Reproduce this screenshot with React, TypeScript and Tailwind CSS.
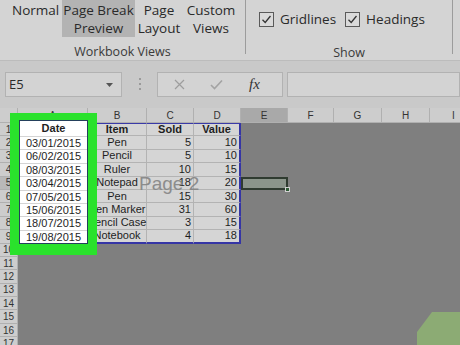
import React from 'react';

const rows: string[][] = [
  ['Date', 'Item', 'Sold', 'Value'],
  ['03/01/2015', 'Pen', '5', '10'],
  ['06/02/2015', 'Pencil', '5', '10'],
  ['08/03/2015', 'Ruler', '10', '15'],
  ['03/04/2015', 'Notepad', '18', '20'],
  ['07/05/2015', 'Pen', '15', '30'],
  ['15/06/2015', 'Pen Marker', '31', '60'],
  ['18/07/2015', 'Pencil Case', '3', '15'],
  ['19/08/2015', 'Notebook', '4', '18'],
];

const letters = ['A', 'B', 'C', 'D', 'E', 'F', 'G', 'H', 'I'];

function Check() {
  return (
    <span className="flex h-[15px] w-[15px] items-center justify-center border border-[#5a5a5a] bg-[#dadada]">
      <svg width="11" height="11" viewBox="0 0 11 11">
        <path d="M1.5 5.8 L4.2 8.5 L9.5 2" fill="none" stroke="#333" strokeWidth="1.3" />
      </svg>
    </span>
  );
}

function Cell({ r, c }: { r: number; c: number }) {
  // r: 1..17, c: 1..9 (A..I)
  const inPrint = r <= 9 && c <= 4;
  if (r === 5 && c === 5) {
    return (
      <div className="relative border-2 border-[#2f3b30] bg-[#8b958b]">
        <span className="absolute -bottom-[4px] -right-[4px] h-[5px] w-[5px] border border-[#d0d0d0] bg-[#2f5b35]" />
      </div>
    );
  }
  if (!inPrint) return <div />;
  const v = rows[r - 1][c - 1];
  const bold = r === 1;
  const align = c === 3 || c === 4 ? (bold ? 'justify-center' : 'justify-end pr-[2px]') : 'justify-center';
  return (
    <div
      className={`flex items-center whitespace-nowrap bg-[#d5d5d5] text-[11px] leading-none text-[#1e1e1e] border-b border-r border-[#b3b3b3] ${
        bold ? 'font-bold border-t border-t-[#3a3aa8]' : ''
      } ${c === 4 ? 'border-r-2 border-r-[#3535a5]' : ''} ${r === 9 ? 'border-b-2 border-b-[#3535a5]' : ''} ${align}`}
    >
      {c === 1 ? '' : v}
    </div>
  );
}

export default function App() {
  return (
    <div className="relative h-[345px] w-[460px] overflow-hidden bg-[#d3d3d3] font-['Open_Sans',sans-serif] text-[#2a2a2a]">
      {/* Ribbon */}
      <div className="flex h-[61px] border-b border-[#bcbcbc] bg-[#d4d4d4]">
        <div className="flex w-[245px] flex-col">
          <div className="flex h-[37px] text-[13.5px] leading-[18px]">
            <div className="w-[62px] pl-[12px] pt-[1px]">Normal</div>
            <div className="flex w-[73px] flex-col items-center bg-[#b3b3b3] pt-[1px]">
              <span>Page Break</span>
              <span>Preview</span>
            </div>
            <div className="flex w-[48px] flex-col items-center pt-[1px]">
              <span>Page</span>
              <span>Layout</span>
            </div>
            <div className="flex w-[56px] flex-col items-center pt-[1px]">
              <span>Custom</span>
              <span>Views</span>
            </div>
          </div>
          <div className="mt-[6px] text-center text-[12.5px] text-[#3a3a3a]">Workbook Views</div>
        </div>
        <div className="h-[54px] w-px bg-[#9c9c9c]" />
        <div className="flex w-[206px] flex-col">
          <div className="flex items-center pl-[13px] pt-[9px] text-[13.5px]">
            <Check />
            <span className="ml-[6px]">Gridlines</span>
            <span className="ml-[9px]">
              <Check />
            </span>
            <span className="ml-[6px]">Headings</span>
          </div>
          <div className="mt-[15px] text-center text-[12.5px] text-[#3a3a3a]">Show</div>
        </div>
        <div className="h-[54px] w-px bg-[#9c9c9c]" />
      </div>

      {/* Formula bar */}
      <div className="flex h-[47px] items-start bg-[#c9c9c9] pt-[11px]">
        <div className="ml-[5px] flex h-[25px] w-[117px] items-center justify-between border border-[#b2b2b2] bg-[#d3d3d3] pl-[3px] pr-[8px] text-[13px]">
          <span>E5</span>
          <svg width="7" height="4" viewBox="0 0 7 4">
            <path d="M0 0 L7 0 L3.5 4 Z" fill="#555" />
          </svg>
        </div>
        <div className="ml-[17px] mt-[6px] flex flex-col gap-[3px]">
          <span className="h-[2px] w-[2px] bg-[#9a9a9a]" />
          <span className="h-[2px] w-[2px] bg-[#9a9a9a]" />
          <span className="h-[2px] w-[2px] bg-[#9a9a9a]" />
        </div>
        <div className="ml-[16px] flex h-[25px] w-[126px] items-center border border-[#b2b2b2] bg-[#d3d3d3]">
          <svg className="ml-[16px]" width="11" height="11" viewBox="0 0 11 11">
            <path d="M1 1 L10 10 M10 1 L1 10" stroke="#9d9d9d" strokeWidth="1.2" />
          </svg>
          <svg className="ml-[25px]" width="13" height="11" viewBox="0 0 13 11">
            <path d="M1 6 L4.5 9.5 L12 1.5" fill="none" stroke="#a3a3a3" strokeWidth="1.6" />
          </svg>
          <span className="ml-[26px] font-['Liberation_Serif',serif] text-[15px] italic text-[#333]">fx</span>
        </div>
        <div className="ml-[4px] h-[25px] flex-1 border border-[#b2b2b2] bg-[#d3d3d3]" />
      </div>

      {/* Sheet */}
      <div className="grid grid-cols-[18px_70px_59px_47px_47px_47px_46px_48px_48px_48px] grid-rows-[15px_repeat(17,13.4px)] bg-[#7f7f7f] font-['Liberation_Sans',sans-serif]">
        <div className="bg-[#cdcdcd] border-b border-r border-[#b0b0b0]" />
        {letters.map((l) => (
          <div
            key={l}
            className={`flex items-center justify-center border-b border-r border-[#b0b0b0] text-[10px] text-[#333] ${
              l === 'E' ? 'bg-[#a9a9a9]' : 'bg-[#cdcdcd]'
            }`}
          >
            {l}
          </div>
        ))}
        {Array.from({ length: 17 }, (_, i) => i + 1).map((r) => (
          <React.Fragment key={r}>
            <div
              className={`flex items-center justify-center border-b border-r border-[#b0b0b0] text-[10px] text-[#333] ${
                r === 5 ? 'bg-[#b9b9b9]' : 'bg-[#cdcdcd]'
              }`}
            >
              {r}
            </div>
            {letters.map((_, ci) => (
              <Cell key={ci} r={r} c={ci + 1} />
            ))}
          </React.Fragment>
        ))}
      </div>

      {/* Page watermark */}
      <div className="pointer-events-none absolute left-[139px] top-[170px] font-['Liberation_Sans',sans-serif] text-[19px] text-[#858585] opacity-90">
        Page 2
      </div>

      {/* Green highlight on Date column */}
      <div className="absolute left-[10px] top-[113px] h-[142px] w-[87px] bg-[#2ae22c] pb-[11px] pl-[9px] pr-[9px] pt-[7px]">
        <div className="flex h-full flex-col border border-[#24405c] bg-white font-['Liberation_Sans',sans-serif] text-[11px] text-[#1e1e1e]">
          {rows.map((row, i) => (
            <div
              key={i}
              className={`flex items-center justify-center border-b border-[#d4d4d4] last:border-b-0 ${
                i === 0 ? 'h-[16px] font-bold' : 'h-[13.4px]'
              }`}
            >
              {row[0]}
            </div>
          ))}
        </div>
      </div>

      {/* Corner decoration */}
      <svg className="absolute left-0 top-0" width="460" height="345" viewBox="0 0 460 345">
        <polygon points="417,345 417,332 432,312 460,312 460,345" fill="#8cab74" />
      </svg>
    </div>
  );
}
